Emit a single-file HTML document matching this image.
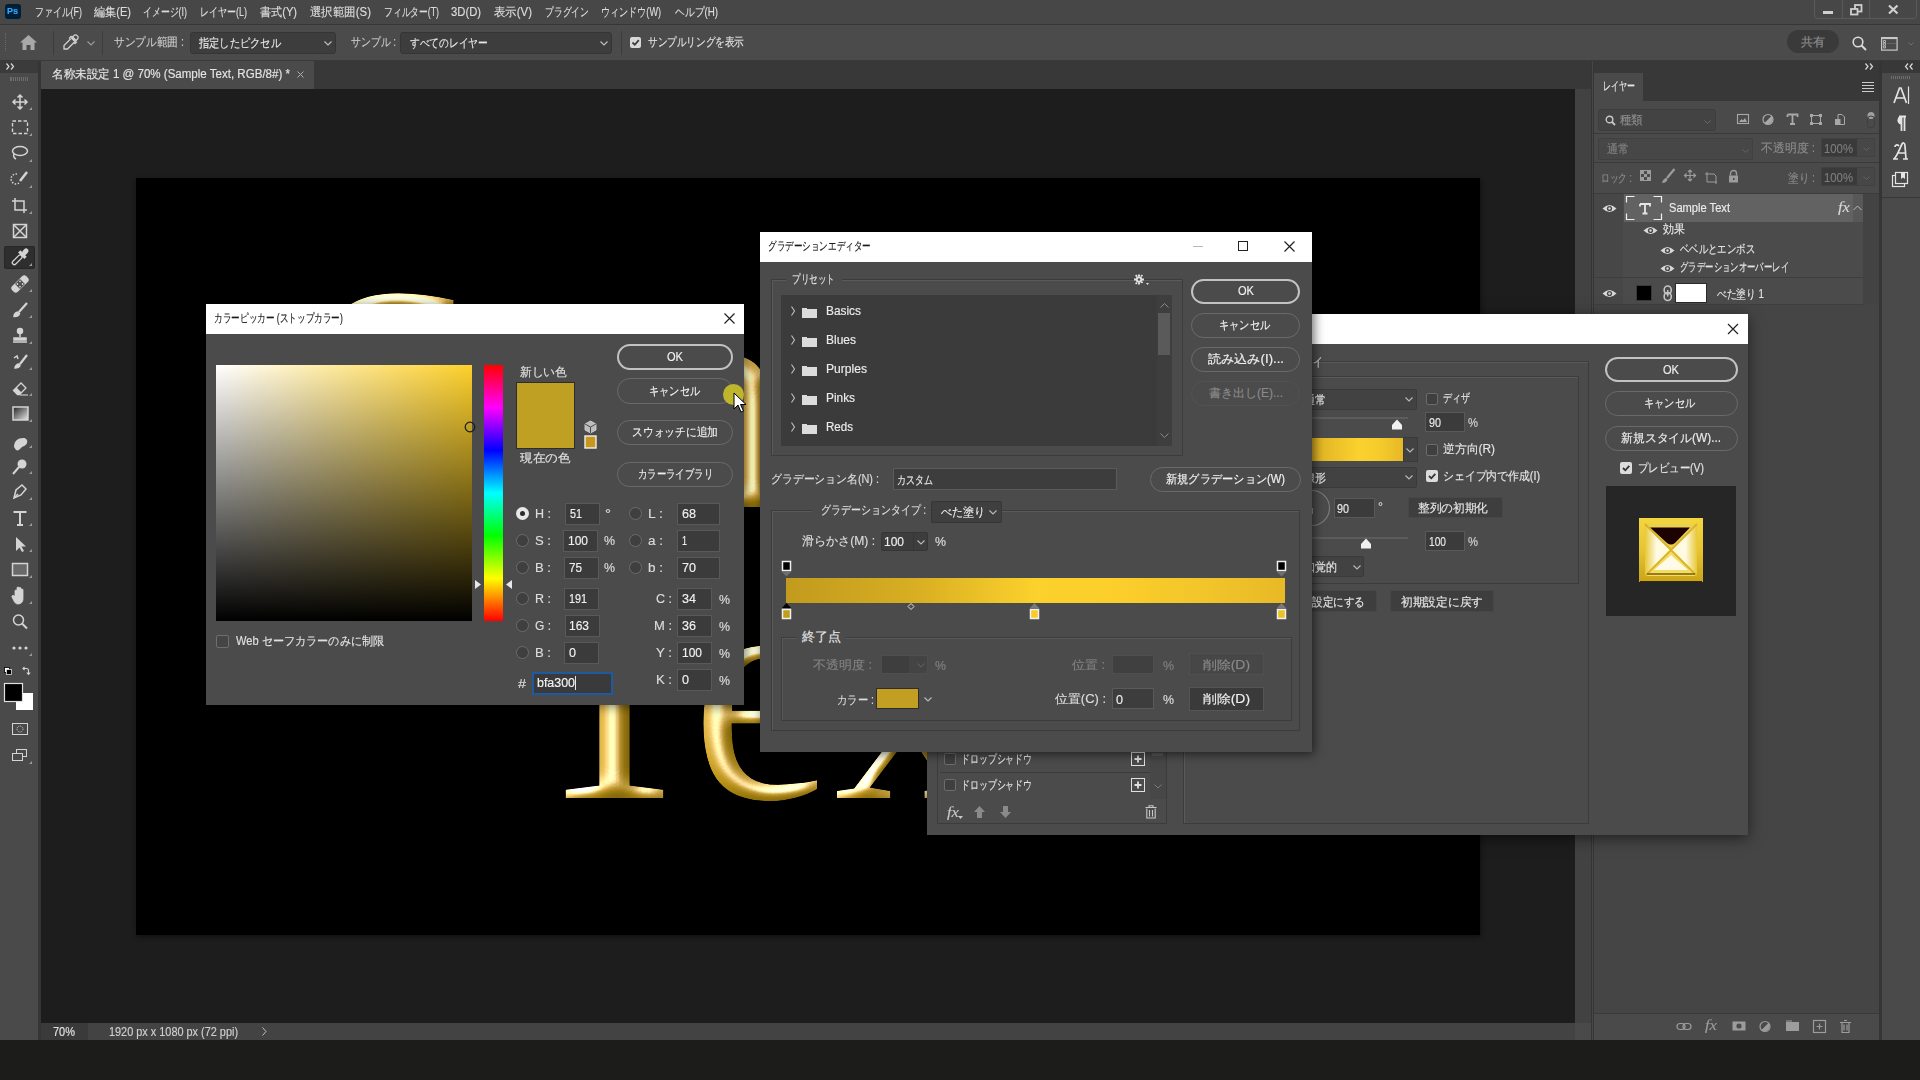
<!DOCTYPE html>
<html><head><meta charset="utf-8">
<style>
*{box-sizing:border-box;margin:0;padding:0}
html,body{width:1920px;height:1080px;overflow:hidden;background:#1c1d1b;font-family:"Liberation Sans",sans-serif;color:#d6d6d6;font-size:12px}
.a{position:absolute}
.t{position:absolute;white-space:nowrap;line-height:1;font-size:12px;transform-origin:0 0;color:#dcdcdc;-webkit-text-stroke:0.15px currentColor}
.inp{position:absolute;background:#3b3b3b;border:1px solid #595959}
.btn{position:absolute;border:1px solid #6a6a6a;border-radius:13px}
.btnp{position:absolute;border:2px solid #c2c2c2;border-radius:13px}
.rad{position:absolute;width:13px;height:13px;border-radius:50%;border:1px solid #6c6c6c;background:#3f3f3f}
.chk{position:absolute;width:12px;height:12px;border-radius:2px;border:1px solid #6c6c6c;background:#3f3f3f}
.grp{position:absolute;border:1px solid #3c3c3c;box-shadow:1px 1px 0 #5a5a5a inset}
.dlg{position:absolute;background:#4b4b4b;box-shadow:0 3px 14px rgba(0,0,0,.55)}
.title{position:absolute;left:0;top:0;right:0;height:30px;background:#fff}
svg{position:absolute;overflow:visible}
</style></head><body>
<!-- ===== MENU BAR ===== -->
<div class="a" style="left:0;top:0;width:1920px;height:25px;background:#474747;border-bottom:1px solid #363636"></div>
<div class="a" style="left:5px;top:4px;width:16px;height:15px;background:#001e36;border-radius:3px"></div>
<span class="t" style="left:7px;top:7px;font-size:9px;font-weight:bold;color:#31a8ff;transform:scaleX(0.999)">Ps</span>
<span class="t" style="left:35px;top:6px;transform:scaleX(0.742)">ファイル(F)</span>
<span class="t" style="left:94px;top:6px;transform:scaleX(0.925)">編集(E)</span>
<span class="t" style="left:143px;top:6px;transform:scaleX(0.742)">イメージ(I)</span>
<span class="t" style="left:200px;top:6px;transform:scaleX(0.750)">レイヤー(L)</span>
<span class="t" style="left:260px;top:6px;transform:scaleX(0.925)">書式(Y)</span>
<span class="t" style="left:310px;top:6px;transform:scaleX(0.953)">選択範囲(S)</span>
<span class="t" style="left:384px;top:6px;transform:scaleX(0.730)">フィルター(T)</span>
<span class="t" style="left:451px;top:6px;transform:scaleX(0.938)">3D(D)</span>
<span class="t" style="left:494px;top:6px;transform:scaleX(0.950)">表示(V)</span>
<span class="t" style="left:545px;top:6px;transform:scaleX(0.733)">プラグイン</span>
<span class="t" style="left:601px;top:6px;transform:scaleX(0.756)">ウィンドウ(W)</span>
<span class="t" style="left:675px;top:6px;transform:scaleX(0.816)">ヘルプ(H)</span>
<!-- window controls -->
<div class="a" style="left:1814px;top:-1px;width:103px;height:20px;border:1px solid #5a5a5a;border-radius:0 0 3px 3px"></div>
<div class="a" style="left:1842px;top:0;width:1px;height:18px;background:#5a5a5a"></div>
<div class="a" style="left:1869px;top:0;width:1px;height:18px;background:#5a5a5a"></div>
<div class="a" style="left:1823px;top:11px;width:10px;height:3px;background:#d0d0d0"></div>
<svg style="left:1850px;top:4px" width="13" height="12"><rect x="5" y="1" width="6.5" height="6.5" fill="none" stroke="#d0d0d0" stroke-width="1.8"/><rect x="1" y="5" width="6.5" height="5.5" fill="#474747" stroke="#d0d0d0" stroke-width="1.8"/></svg>
<svg style="left:1888px;top:5px" width="11" height="9"><path d="M1 0.5L9.5 8.5M9.5 0.5L1 8.5" stroke="#d0d0d0" stroke-width="2.2"/></svg>

<!-- ===== OPTIONS BAR ===== -->
<div class="a" style="left:0;top:25px;width:1920px;height:36px;background:#4b4b4b;border-bottom:1px solid #3a3a3a"></div>
<div class="a" style="left:5px;top:33px;width:2px;height:18px;border-left:1px dotted #6a6a6a"></div>
<svg style="left:20px;top:35px" width="17" height="15"><path d="M8.5 0L17 7.5H14.5V15H10.5V10H6.5V15H2.5V7.5H0Z" fill="#a8a8a8"/></svg>
<div class="a" style="left:53px;top:31px;width:1px;height:24px;background:#3c3c3c"></div>
<svg style="left:62px;top:34px" width="17" height="17"><path d="M15 1.5a2 2 0 0 0-3 0l-2 2-1-1-1.5 1.5 1 1-6.5 6.5v3.5h3.5l6.5-6.5 1 1 1.5-1.5-1-1 2-2a2 2 0 0 0 0-3z" fill="none" stroke="#d0d0d0" stroke-width="1.3"/><path d="M10 3.5l3.5 3.5" stroke="#d0d0d0" stroke-width="3"/></svg>
<svg style="left:87px;top:41px" width="8" height="5"><path d="M0.5 0.5L4 4L7.5 0.5" fill="none" stroke="#9a9a9a" stroke-width="1.2"/></svg>
<div class="a" style="left:102px;top:31px;width:1px;height:24px;background:#3c3c3c"></div>
<span class="t" style="left:114px;top:36px;color:#c8c8c8;transform:scaleX(0.890)">サンプル範囲 :</span>
<div class="inp" style="left:190px;top:32px;width:146px;height:22px;background:#3d3d3d;border-color:#353535;border-radius:3px"></div>
<span class="t" style="left:199px;top:37px;color:#e6e6e6;transform:scaleX(0.854)">指定したピクセル</span>
<svg style="left:324px;top:41px" width="8" height="5"><path d="M0.5 0.5L4 4L7.5 0.5" fill="none" stroke="#bdbdbd" stroke-width="1.2"/></svg>
<span class="t" style="left:351px;top:36px;color:#c8c8c8;transform:scaleX(0.823)">サンプル :</span>
<div class="inp" style="left:400px;top:32px;width:212px;height:22px;background:#3d3d3d;border-color:#353535;border-radius:3px"></div>
<span class="t" style="left:410px;top:37px;color:#e6e6e6;transform:scaleX(0.812)">すべてのレイヤー</span>
<svg style="left:600px;top:41px" width="8" height="5"><path d="M0.5 0.5L4 4L7.5 0.5" fill="none" stroke="#bdbdbd" stroke-width="1.2"/></svg>
<div class="a" style="left:621px;top:31px;width:1px;height:24px;background:#3c3c3c"></div>
<div class="a" style="left:630px;top:37px;width:11px;height:11px;background:#d8d8d8;border-radius:2px"></div>
<svg style="left:631px;top:38px" width="9" height="9"><path d="M1.5 4.5L3.8 6.8L7.8 2.2" fill="none" stroke="#3a3a3a" stroke-width="1.8"/></svg>
<span class="t" style="left:648px;top:36px;color:#e0e0e0;transform:scaleX(0.800)">サンプルリングを表示</span>
<div class="a" style="left:1787px;top:30px;width:52px;height:23px;background:#3a3a3a;border-radius:12px"></div>
<span class="t" style="left:1801px;top:36px;color:#8e8e8e;transform:scaleX(1.000)">共有</span>
<svg style="left:1852px;top:36px" width="15" height="15"><circle cx="6" cy="6" r="4.8" fill="none" stroke="#dcdcdc" stroke-width="1.6"/><path d="M9.5 9.5L14 14" stroke="#dcdcdc" stroke-width="2"/></svg>
<svg style="left:1881px;top:37px" width="17" height="14"><rect x="0.6" y="0.6" width="15.5" height="12.5" fill="none" stroke="#c8c8c8" stroke-width="1.2"/><path d="M1 1.5H16" stroke="#c8c8c8" stroke-width="1.2"/><path d="M2.5 3.5H4.5V5.5H2.5ZM2.5 6.2H4.5V8.2H2.5ZM2.5 9H4.5V11H2.5Z" fill="none" stroke="#c8c8c8" stroke-width="0.8"/><path d="M6 6.5H15" stroke="#6a6a6a" stroke-width="0.8"/></svg>
<svg style="left:1908px;top:42px" width="6" height="4"><path d="M0.5 0.5L3 3L5.5 0.5" fill="none" stroke="#707070" stroke-width="1"/></svg>

<!-- ===== LEFT TOOLBAR ===== -->
<div class="a" style="left:0;top:61px;width:38px;height:979px;background:#4a4a4a"></div>
<div class="a" style="left:0;top:61px;width:38px;height:12px;background:#3b3b3b"></div>
<svg style="left:6px;top:63px" width="10" height="7"><path d="M0.5 0.5L3 3.5L0.5 6.5M5 0.5L7.5 3.5L5 6.5" fill="none" stroke="#d8d8d8" stroke-width="1.2"/></svg>
<div class="a" style="left:10px;top:77px;width:19px;height:4px;border-left:1px solid #6e6e6e;background:repeating-linear-gradient(90deg,#6e6e6e 0 1px,transparent 1px 2px)"></div>
<div class="a" style="left:38px;top:61px;width:3px;height:979px;background:#353535"></div>
<div class="a" style="left:4px;top:246px;width:31px;height:23px;background:#2e2e2e;border:1px solid #262626;border-radius:2px"></div>
<svg style="left:0;top:0" width="40" height="800">
<defs><linearGradient id="tgrad" x1="0" y1="0" x2="1" y2="1"><stop offset="0" stop-color="#222"/><stop offset="1" stop-color="#e8e8e8"/></linearGradient></defs>
<g fill="none" stroke="#d4d4d4" stroke-width="1.5">
<!-- move -->
<path d="M20 95V109M13 102H27M17.5 97.5L20 95L22.5 97.5M17.5 106.5L20 109L22.5 106.5M15.5 99.5L13 102L15.5 104.5M24.5 99.5L27 102L24.5 104.5"/>
<!-- marquee -->
<rect x="12.5" y="121" width="15" height="12.5" stroke-dasharray="3.5 2" stroke-width="1.4"/>
<!-- lasso -->
<ellipse cx="20" cy="151" rx="7.5" ry="4.5"/><path d="M14 154c-1 2 0 4 2 5"/>
<!-- quick select -->
<path d="M17 174a5 5 0 1 0 2 9" stroke-dasharray="1.5 1.5"/><path d="M27 172L20 181" stroke-width="2.5"/>
<!-- crop -->
<path d="M15 198V210H27M12 201H24V213"/>
<!-- frame -->
<rect x="13.5" y="224.5" width="13" height="13"/><path d="M13.5 224.5L26.5 237.5M26.5 224.5L13.5 237.5"/>
<!-- eyedropper -->
<g transform="rotate(45 20 257)"><rect x="18" y="255" width="4" height="12" rx="2" stroke-width="1.3"/><rect x="15.5" y="252" width="9" height="3.2" fill="#d4d4d4" stroke="none"/><rect x="17.5" y="246" width="5" height="7" rx="2.5" fill="#d4d4d4" stroke="none"/></g>
<!-- healing -->
<g transform="rotate(-45 20 284)"><rect x="10" y="280" width="20" height="8" rx="3" fill="#d4d4d4" stroke="none"/><rect x="16.5" y="280.5" width="7" height="7" fill="#4a4a4a" stroke="none"/><g fill="#d4d4d4" stroke="none"><circle cx="18.2" cy="282.2" r="0.9"/><circle cx="21.8" cy="282.2" r="0.9"/><circle cx="18.2" cy="285.8" r="0.9"/><circle cx="21.8" cy="285.8" r="0.9"/></g></g>
<!-- brush -->
<path d="M27 303L19 312" stroke-width="2.2"/><path d="M18 312c-2 0-4 2-4 4.5c2 0 5-1 5.5-3z" fill="#d4d4d4"/>
<!-- stamp -->
<circle cx="20" cy="331" r="2.5" fill="#d4d4d4"/><path d="M20 333V337M14 338H26V340H14Z" fill="#d4d4d4"/><path d="M13 342H27"/>
<!-- history brush -->
<path d="M27 355L20 364" stroke-width="2.2"/><path d="M19 364c-2 0-4 2-4 4c2 0 5-1 5-3z" fill="#d4d4d4"/><path d="M14 358l3-2 1 3"/>
<!-- eraser -->
<path d="M13.5 390.5L21 383L26 388L19.5 394.5H17.5Z" stroke-width="1.3"/><path d="M13.5 390.5L16.5 387.5L21.5 392.5L19.5 394.5H17.5Z" fill="#d4d4d4" stroke="none"/><path d="M20 395H28" stroke-width="1.1"/>
<!-- gradient tool -->
<rect x="13" y="407" width="15" height="13" stroke="#d4d4d4" fill="url(#tgrad)"/>
<!-- blur -->
<path d="M14 447c0-6 4-9 9-9c3 0 5 2 4 5c-1 3-4 3-6 5c-2 2-3 3-5 2z" fill="#d4d4d4" stroke="none"/>
<!-- dodge -->
<circle cx="22" cy="464" r="4.5" fill="#d4d4d4" stroke="none"/><path d="M19 467L13 474" stroke-width="2"/>
<!-- pen -->
<path d="M14 498L16 490L22 485L26 489L21 495Z"/><path d="M14 498L18 494"/>
<!-- type -->
<path d="M13.5 512H26.5M20 512V525M17 525H23" stroke-width="2"/>
<!-- path select -->
<path d="M16 537V551L19.5 547.5L22 552L24 551L21.5 546.5H26Z" fill="#d4d4d4" stroke="none"/>
<!-- rectangle -->
<rect x="12.5" y="563.5" width="15" height="12" fill="#6a6a6a" stroke="#d4d4d4"/>
<!-- hand -->
<path d="M15 599V591a1 1 0 0 1 2 0V596M17 596V588a1 1 0 0 1 2 0V596M19 596V588.5a1 1 0 0 1 2 0V596M21 596V590a1 1 0 0 1 2 0V599c0 3-2 5-5 5c-2 0-3-1-4-3l-2-4a1 1 0 0 1 2-1z" fill="#d4d4d4" stroke="#d4d4d4" stroke-width="0.8"/>
<!-- zoom -->
<circle cx="18.5" cy="620" r="5"/><path d="M22 623.5L27 628.5" stroke-width="2"/>
</g>
<g fill="#d4d4d4"><circle cx="14" cy="648" r="1.6"/><circle cx="20" cy="648" r="1.6"/><circle cx="26" cy="648" r="1.6"/></g>
<!-- small tri marks -->
<g fill="#9a9a9a">
<path d="M29 110h3v-3z"/><path d="M29 136h3v-3z"/><path d="M29 162h3v-3z"/><path d="M29 188h3v-3z"/><path d="M29 214h3v-3z"/><path d="M29 266h3v-3z"/><path d="M29 292h3v-3z"/><path d="M29 318h3v-3z"/><path d="M29 344h3v-3z"/><path d="M29 370h3v-3z"/><path d="M29 396h3v-3z"/><path d="M29 422h3v-3z"/><path d="M29 448h3v-3z"/><path d="M29 474h3v-3z"/><path d="M29 500h3v-3z"/><path d="M29 526h3v-3z"/><path d="M29 552h3v-3z"/><path d="M29 578h3v-3z"/><path d="M29 604h3v-3z"/><path d="M29 656h3v-3z"/><path d="M29 764h3v-3z"/>
</g>
<!-- fg/bg small -->
<rect x="4.5" y="667.5" width="5" height="5" fill="#fff" stroke="#000" stroke-width="0.8"/><rect x="6.5" y="669.5" width="5" height="5" fill="#000" stroke="#ddd" stroke-width="0.8"/>
<path d="M23 668.5H26.5Q28.5 668.5 28.5 670.5V674M26.8 672.5L28.5 674.5L30.2 672.5M24.5 667L23 668.5L24.5 670" fill="none" stroke="#d4d4d4" stroke-width="1.1"/>
<!-- fg bg -->
<rect x="15.5" y="692.5" width="18" height="18" fill="#fff" stroke="#4a4a4a"/>
<rect x="4.5" y="683.5" width="18" height="18" fill="#000" stroke="#e0e0e0" stroke-width="1.2"/>
<!-- quick mask -->
<rect x="12.5" y="723.5" width="15" height="11" fill="none" stroke="#d4d4d4"/><circle cx="20" cy="729" r="3" fill="none" stroke="#d4d4d4" stroke-dasharray="1 1"/>
<!-- screen mode -->
<rect x="16.5" y="749.5" width="10" height="7" fill="none" stroke="#d4d4d4"/><rect x="12.5" y="753.5" width="10" height="7" fill="#4a4a4a" stroke="#d4d4d4"/>
</svg>

<!-- ===== DOCUMENT AREA ===== -->
<div class="a" style="left:41px;top:61px;width:1550px;height:28px;background:#383838"></div>
<div class="a" style="left:41px;top:61px;width:273px;height:28px;background:#4a4a4a"></div>
<span class="t" style="left:52px;top:68px;color:#e4e4e4;transform:scaleX(0.962)">名称未設定 1 @ 70% (Sample Text, RGB/8#) *</span>
<svg style="left:297px;top:71px" width="7" height="7"><path d="M0.5 0.5L6.5 6.5M6.5 0.5L0.5 6.5" stroke="#b0b0b0" stroke-width="1"/></svg>
<div class="a" style="left:41px;top:89px;width:1534px;height:934px;background:#1d1d1d"></div>
<div class="a" style="left:1575px;top:89px;width:16px;height:934px;background:#424242"></div>
<div class="a" style="left:41px;top:1023px;width:1550px;height:17px;background:#434343"></div>
<div class="a" style="left:41px;top:1023px;width:47px;height:17px;background:#3a3a3a"></div>
<span class="t" style="left:53px;top:1026px;color:#e0e0e0;transform:scaleX(0.915)">70%</span>
<span class="t" style="left:109px;top:1026px;color:#d0d0d0;transform:scaleX(0.908)">1920 px x 1080 px (72 ppi)</span>
<svg style="left:262px;top:1027px" width="5" height="9"><path d="M0.5 0.5L4 4.5L0.5 8.5" fill="none" stroke="#c0c0c0" stroke-width="1"/></svg>
<div class="a" style="left:1575px;top:1023px;width:16px;height:17px;background:#4a4a4a"></div>

<!-- CANVAS -->
<div id="canvas" class="a" style="left:136px;top:178px;width:1344px;height:757px;background:#000;overflow:hidden;box-shadow:1px 2px 5px rgba(0,0,0,.45)">
<svg width="0" height="0" style="position:absolute"><defs>
<filter id="bevel" x="-5%" y="-5%" width="110%" height="110%">
<feGaussianBlur in="SourceAlpha" stdDeviation="8" result="blur"/>
<feSpecularLighting in="blur" surfaceScale="10" specularConstant="1.4" specularExponent="12" lighting-color="#fffbe0" result="spec"><feDistantLight azimuth="240" elevation="45"/></feSpecularLighting>
<feComposite in="spec" in2="SourceAlpha" operator="in" result="specOut"/>
<feDiffuseLighting in="blur" surfaceScale="10" diffuseConstant="1.1" lighting-color="#fff" result="diff"><feDistantLight azimuth="225" elevation="55"/></feDiffuseLighting>
<feComposite in="SourceGraphic" in2="diff" operator="arithmetic" k1="1.25" k2="0" k3="0" k4="0" result="lit"/>
<feComposite in="lit" in2="specOut" operator="arithmetic" k1="0" k2="1" k3="1" k4="0" result="o"/>
<feComposite in="o" in2="SourceAlpha" operator="in"/>
</filter></defs></svg>
<div class="a" style="left:169px;top:59px;font-family:'Liberation Serif',serif;font-size:323px;line-height:1;white-space:nowrap;color:#c89e18;filter:url(#bevel)">Sample</div>
<div class="a" style="left:380px;top:350px;font-family:'Liberation Serif',serif;font-size:323px;line-height:1;white-space:nowrap;color:#c89e18;filter:url(#bevel)">Text</div>
</div>

<!-- ===== RIGHT PANELS ===== -->

<div class="a" style="left:1591px;top:61px;width:3px;height:979px;background:#353535"></div>
<div class="a" style="left:1592px;top:61px;width:1px;height:979px;background:#474747"></div>
<div class="a" style="left:1594px;top:61px;width:326px;height:12px;background:#383838"></div>
<svg style="left:1865px;top:63px" width="10" height="7"><path d="M0.5 0.5L3 3.5L0.5 6.5M5 0.5L7.5 3.5L5 6.5" fill="none" stroke="#d8d8d8" stroke-width="1.2"/></svg>
<svg style="left:1905px;top:63px" width="10" height="7"><path d="M3 0.5L0.5 3.5L3 6.5M7.5 0.5L5 3.5L7.5 6.5" fill="none" stroke="#d8d8d8" stroke-width="1.2"/></svg>
<div class="a" style="left:1594px;top:73px;width:285px;height:967px;background:#454545"></div>
<div class="a" style="left:1594px;top:73px;width:285px;height:28px;background:#383838"></div>
<div class="a" style="left:1594px;top:73px;width:49px;height:28px;background:#4a4a4a"></div>
<span class="t" style="left:1603px;top:80px;color:#e8e8e8;transform:scaleX(0.667)">レイヤー</span>
<div class="a" style="left:1862px;top:82px;width:12px;height:1px;box-shadow:0 0 0 #ccc,0 3px 0 #ccc,0 6px 0 #ccc,0 9px 0 #ccc;background:#ccc"></div>
<div class="a" style="left:1594px;top:101px;width:285px;height:32px;background:#4a4a4a"></div>
<div class="a" style="left:1598px;top:109px;width:118px;height:22px;background:#434343;border:1px solid #3e3e3e;border-radius:3px"></div>
<svg style="left:1605px;top:115px" width="11" height="11"><circle cx="4.5" cy="4.5" r="3.3" fill="none" stroke="#c8c8c8" stroke-width="1.4"/><path d="M7 7L10 10" stroke="#c8c8c8" stroke-width="1.8"/></svg>
<span class="t" style="left:1620px;top:114px;color:#8c8c8c;transform:scaleX(0.958)">種類</span>
<svg style="left:1704px;top:120px" width="7" height="4"><path d="M0.5 0.5L3.5 3.5L6.5 0.5" fill="none" stroke="#6a6a6a" stroke-width="1"/></svg>
<svg style="left:1736px;top:113px" width="140" height="16">
<rect x="1.5" y="1.5" width="11" height="9" fill="none" stroke="#a8a8a8" stroke-width="1.1"/><path d="M3 9L5.5 6L7 7.5L9 5L11 9Z" fill="#a8a8a8"/>
<circle cx="32" cy="6.5" r="5" fill="none" stroke="#a8a8a8" stroke-width="1.2"/><path d="M28.5 10a5 5 0 0 0 7-7z" fill="#a8a8a8"/>
<path d="M51.5 1.5H61.5V4M56.5 1.5V11M54 11H59M51.5 1.5V4" fill="none" stroke="#a8a8a8" stroke-width="1.8"/>
<rect x="75.5" y="2.5" width="9" height="8" fill="none" stroke="#a8a8a8" stroke-width="1"/><g fill="#a8a8a8"><rect x="74" y="1" width="3" height="3"/><rect x="83" y="1" width="3" height="3"/><rect x="74" y="9" width="3" height="3"/><rect x="83" y="9" width="3" height="3"/></g>
<path d="M102 1.5H106L108.5 4V11.5H102Z" fill="none" stroke="#a8a8a8" stroke-width="1"/><rect x="99" y="6" width="5.5" height="6" fill="#a8a8a8"/>
<circle cx="135" cy="2.5" r="3.5" fill="#a0a0a0"/><rect x="131.5" y="3" width="7" height="12" rx="3.5" fill="none" stroke="#3e3e3e"/>
</svg>
<div class="a" style="left:1594px;top:133px;width:285px;height:1px;background:#3a3a3a"></div>
<div class="a" style="left:1594px;top:134px;width:285px;height:28px;background:#4a4a4a"></div>
<div class="a" style="left:1598px;top:138px;width:155px;height:22px;background:#474747;border:1px solid #404040;border-radius:2px"></div>
<span class="t" style="left:1607px;top:143px;color:#808080;transform:scaleX(0.917)">通常</span>
<svg style="left:1742px;top:149px" width="7" height="4"><path d="M0.5 0.5L3.5 3.5L6.5 0.5" fill="none" stroke="#626262" stroke-width="1"/></svg>
<span class="t" style="left:1761px;top:142px;color:#8a8a8a;transform:scaleX(0.988)">不透明度 :</span>
<div class="a" style="left:1821px;top:138px;width:54px;height:19px;background:#474747;border:1px solid #414141"></div>
<div class="a" style="left:1822px;top:139px;width:35px;height:17px;background:#3a3a3a"></div>
<span class="t" style="left:1824px;top:143px;color:#7c7c7c;transform:scaleX(0.945)">100%</span>
<svg style="left:1863px;top:147px" width="7" height="4"><path d="M0.5 0.5L3.5 3.5L6.5 0.5" fill="none" stroke="#626262" stroke-width="1"/></svg>
<div class="a" style="left:1594px;top:162px;width:285px;height:1px;background:#3a3a3a"></div>
<div class="a" style="left:1594px;top:163px;width:285px;height:30px;background:#4a4a4a"></div>
<span class="t" style="left:1601px;top:172px;color:#8a8a8a;transform:scaleX(0.726)">ロック :</span>
<svg style="left:1640px;top:170px" width="100" height="14">
<rect x="0.5" y="0.5" width="10" height="10" fill="none" stroke="#9c9c9c"/><g fill="#9c9c9c"><rect x="1" y="1" width="3" height="3"/><rect x="7" y="1" width="3" height="3"/><rect x="4" y="4" width="3" height="3"/><rect x="1" y="7" width="3" height="3"/><rect x="7" y="7" width="3" height="3"/></g>
<path d="M34.5 -1L27 8" stroke="#9c9c9c" stroke-width="2.2"/><path d="M26.5 8c-2 0-4 2-4.5 5c2.5 0 5-1 5.5-3.5z" fill="#9c9c9c"/>
<path d="M50 0V11M44.5 5.5H55.5M48 2L50 0L52 2M48 9L50 11L52 9M46.5 3.5L44.5 5.5L46.5 7.5M53.5 3.5L55.5 5.5L53.5 7.5" fill="none" stroke="#9c9c9c" stroke-width="1.2"/>
<path d="M67 2V12H77M65 4H74L76 6V14" fill="none" stroke="#9c9c9c" stroke-width="1"/>
<rect x="89" y="5.5" width="9" height="7" fill="#9c9c9c"/><path d="M90.5 5.5V3.5a3 3 0 0 1 6 0V5.5" fill="none" stroke="#9c9c9c" stroke-width="1.4"/><rect x="93" y="8" width="1.5" height="2" fill="#4a4a4a"/>
</svg>
<span class="t" style="left:1788px;top:172px;color:#8a8a8a;transform:scaleX(0.880)">塗り :</span>
<div class="a" style="left:1821px;top:167px;width:54px;height:19px;background:#474747;border:1px solid #414141"></div>
<div class="a" style="left:1822px;top:168px;width:35px;height:17px;background:#3a3a3a"></div>
<span class="t" style="left:1824px;top:172px;color:#7c7c7c;transform:scaleX(0.945)">100%</span>
<svg style="left:1863px;top:176px" width="7" height="4"><path d="M0.5 0.5L3.5 3.5L6.5 0.5" fill="none" stroke="#626262" stroke-width="1"/></svg>
<div class="a" style="left:1594px;top:193px;width:285px;height:1px;background:#3c3c3c"></div>
<!-- layer list -->
<div class="a" style="left:1594px;top:194px;width:29px;height:110px;background:#474747"></div>
<div class="a" style="left:1623px;top:194px;width:240px;height:84px;background:#4b4b4b"></div>
<div class="a" style="left:1624px;top:194px;width:229px;height:28px;background:#626262"></div>
<div class="a" style="left:1853px;top:194px;width:10px;height:28px;background:#585858"></div>
<div class="a" style="left:1863px;top:194px;width:16px;height:110px;background:#434343"></div>
<div class="a" style="left:1594px;top:277px;width:269px;height:1px;background:#3e3e3e"></div>
<div class="a" style="left:1623px;top:278px;width:240px;height:27px;background:#4b4b4b"></div>
<div class="a" style="left:1594px;top:304px;width:269px;height:1px;background:#3e3e3e"></div>
<svg style="left:1600px;top:200px" width="120" height="100">
<g id="eye"><path d="M2.5 8.5Q9.5 1.5 16.5 8.5Q9.5 15.5 2.5 8.5Z" fill="#d8d8d8"/><circle cx="9.5" cy="8.5" r="2.6" fill="#474747"/><circle cx="9.5" cy="8.5" r="1.2" fill="#d8d8d8"/></g>
<g transform="translate(41 22)"><path d="M2.5 8.5Q9.5 1.5 16.5 8.5Q9.5 15.5 2.5 8.5Z" fill="#d8d8d8"/><circle cx="9.5" cy="8.5" r="2.6" fill="#474747"/><circle cx="9.5" cy="8.5" r="1.2" fill="#d8d8d8"/></g>
<g transform="translate(58 42)"><path d="M2.5 8.5Q9.5 1.5 16.5 8.5Q9.5 15.5 2.5 8.5Z" fill="#d8d8d8"/><circle cx="9.5" cy="8.5" r="2.6" fill="#474747"/><circle cx="9.5" cy="8.5" r="1.2" fill="#d8d8d8"/></g>
<g transform="translate(58 60)"><path d="M2.5 8.5Q9.5 1.5 16.5 8.5Q9.5 15.5 2.5 8.5Z" fill="#d8d8d8"/><circle cx="9.5" cy="8.5" r="2.6" fill="#474747"/><circle cx="9.5" cy="8.5" r="1.2" fill="#d8d8d8"/></g>
<g transform="translate(0 85)"><path d="M2.5 8.5Q9.5 1.5 16.5 8.5Q9.5 15.5 2.5 8.5Z" fill="#d8d8d8"/><circle cx="9.5" cy="8.5" r="2.6" fill="#474747"/><circle cx="9.5" cy="8.5" r="1.2" fill="#d8d8d8"/></g>
<path d="M26.5 2.5V-3.5H34.5M53.5 -3.5H61.5V2.5M26.5 13.5V19.5H34.5M53.5 19.5H61.5V13.5" fill="none" stroke="#f0f0f0" stroke-width="1.2"/>
<path d="M40 4H50V6.5M45 4V13.5M42.5 13.5H47.5M40 4V6.5" fill="none" stroke="#e6e6e6" stroke-width="1.8"/>
</svg>
<span class="t" style="left:1669px;top:202px;color:#ececec;transform:scaleX(0.927)">Sample Text</span>
<span class="t" style="left:1838px;top:201px;color:#d8d8d8;font-style:italic;font-size:14px;font-family:'Liberation Serif',serif;transform:scaleX(1.187)">fx</span>
<svg style="left:1853px;top:205px" width="9" height="6"><path d="M0.5 5L4.5 1L8.5 5" fill="none" stroke="#b8b8b8" stroke-width="1"/></svg>
<span class="t" style="left:1663px;top:223px;color:#e4e4e4;transform:scaleX(0.917)">効果</span>
<span class="t" style="left:1680px;top:243px;color:#e4e4e4;transform:scaleX(0.781)">ベベルとエンボス</span>
<span class="t" style="left:1680px;top:261px;color:#e4e4e4;transform:scaleX(0.699)">グラデーションオーバーレイ</span>
<div class="a" style="left:1636px;top:285px;width:16px;height:16px;background:#000;border:1px solid #3a3a3a"></div>
<svg style="left:1663px;top:285px" width="10" height="17"><rect x="1.2" y="1" width="7" height="8" rx="3.5" fill="none" stroke="#c4c4c4" stroke-width="1.6"/><rect x="1.2" y="7.5" width="7" height="8" rx="3.5" fill="none" stroke="#c4c4c4" stroke-width="1.6"/><path d="M4.7 5V11.5" stroke="#c4c4c4" stroke-width="1.4"/></svg>
<div class="a" style="left:1675px;top:283px;width:32px;height:20px;background:#fff;border:1px solid #2a2a2a"></div>
<span class="t" style="left:1717px;top:288px;color:#e4e4e4;transform:scaleX(0.810)">べた塗り 1</span>
<!-- footer -->
<div class="a" style="left:1594px;top:1013px;width:285px;height:1px;background:#3a3a3a"></div>
<div class="a" style="left:1594px;top:1014px;width:285px;height:26px;background:#4a4a4a"></div>
<svg style="left:1676px;top:1019px" width="180" height="16">
<g fill="none" stroke="#9c9c9c" stroke-width="1.2">
<rect x="1" y="4.5" width="8" height="6" rx="3"/><rect x="7" y="4.5" width="8" height="6" rx="3"/>
<rect x="56.5" y="2.5" width="13" height="9" fill="#9c9c9c" stroke="none"/>
<circle cx="89" cy="7.5" r="5"/>
<rect x="110" y="3" width="13" height="9" fill="#9c9c9c" stroke="none"/><rect x="110" y="1.5" width="6" height="1" fill="#9c9c9c" stroke="none"/>
<rect x="137.5" y="1.5" width="12" height="12"/><path d="M143.5 4.5V10.5M140.5 7.5H146.5"/>
<path d="M164 3.5H175M166 3.5V13.5H173V3.5M168 1.5H171M168 5.5V11.5M171 5.5V11.5"/>
</g>
<circle cx="63" cy="7" r="2.6" fill="#4a4a4a"/>
<path d="M85.5 11a5 5 0 0 0 7-7z" fill="#9c9c9c"/>
</svg>
<span class="t" style="left:1705px;top:1019px;color:#9c9c9c;font-style:italic;font-size:14px;font-family:'Liberation Serif',serif;transform:scaleX(1.187)">fx</span>
<!-- right icon column -->
<div class="a" style="left:1879px;top:61px;width:3px;height:979px;background:#353535"></div>
<div class="a" style="left:1882px;top:73px;width:38px;height:967px;background:#4a4a4a"></div>
<div class="a" style="left:1882px;top:197px;width:38px;height:1px;background:#383838"></div>
<div class="a" style="left:1891px;top:76px;width:19px;height:3px;background:repeating-linear-gradient(90deg,#6e6e6e 0 1px,transparent 1px 2px)"></div>
<svg style="left:1890px;top:86px" width="24" height="104">
<path d="M4 17L9.5 2H11L16.5 17M6 12H14.5" fill="none" stroke="#e4e4e4" stroke-width="1.7"/><path d="M18.5 0.5V18" stroke="#e4e4e4" stroke-width="1.2"/>
<path d="M9 30.5H16M11.5 30.5V45M14.5 30.5V45" fill="none" stroke="#e4e4e4" stroke-width="1.8"/><path d="M11.5 30a4 4.2 0 0 0 0 8.5z" fill="#e4e4e4"/>
<path d="M4 73C7 70 10 62 12 58C13 56 15 57 15 60L16 73M7 67H15M3 73H8M13 73H18M9 60C7 58 5 59 5 61" fill="none" stroke="#e4e4e4" stroke-width="1.7"/>
<rect x="2.5" y="89.5" width="12" height="11" fill="none" stroke="#e4e4e4" stroke-width="1.2"/><rect x="5.5" y="86.5" width="12" height="11" fill="#4a4a4a" stroke="#e4e4e4" stroke-width="1.2"/><path d="M11 87V93L13 91.5L15 93V87Z" fill="#e4e4e4"/>
</svg>


<!-- ===== DIALOGS ===== -->

<div class="dlg" style="left:927px;top:314px;width:821px;height:521px">
<div class="title"></div>
<svg style="left:800px;top:9px" width="12" height="12"><path d="M1 1L11 11M11 1L1 11" stroke="#222" stroke-width="1.2"/></svg>
</div>
<!-- LS contents (absolute coords) -->
<div class="grp" style="left:1183px;top:361px;width:406px;height:463px"></div>
<span class="t" style="left:1196px;top:356px;color:#d4d4d4;transform:scaleX(0.814)">グラデーションオーバーレイ</span>
<div class="grp" style="left:1195px;top:376px;width:384px;height:208px"></div>
<div class="inp" style="left:1200px;top:389px;width:217px;height:21px;background:#424242;border-color:#3a3a3a;border-radius:2px"></div>
<span class="t" style="left:1304px;top:394px;color:#e6e6e6;transform:scaleX(0.917)">通常</span>
<svg style="left:1405px;top:397px" width="8" height="5"><path d="M0.5 0.5L4 4L7.5 0.5" fill="none" stroke="#bbb" stroke-width="1.1"/></svg>
<div class="chk" style="left:1426px;top:393px"></div>
<span class="t" style="left:1443px;top:392px;color:#e4e4e4;transform:scaleX(0.750)">ディザ</span>
<div class="a" style="left:1200px;top:417px;width:208px;height:2px;background:#5c5c5c"></div>
<svg style="left:1391px;top:419px" width="12" height="11"><path d="M6 0.5L11 6V10.5H1V6Z" fill="#f0f0f0"/></svg>
<div class="inp" style="left:1425px;top:412px;width:40px;height:20px"></div>
<span class="t" style="left:1429px;top:417px;color:#e8e8e8;transform:scaleX(0.898)">90</span>
<span class="t" style="left:1468px;top:417px;color:#d4d4d4;transform:scaleX(0.937)">%</span>
<div class="a" style="left:1200px;top:438px;width:203px;height:23px;background:linear-gradient(90deg,#c6a11f 0%,#dcb024 55%,#fbd12e 78%,#f6cc2c 88%,#e6b826 100%)"></div>
<div class="inp" style="left:1403px;top:437px;width:15px;height:25px;background:#424242;border-color:#3a3a3a"></div>
<svg style="left:1406px;top:448px" width="8" height="5"><path d="M0.5 0.5L4 4L7.5 0.5" fill="none" stroke="#bbb" stroke-width="1.1"/></svg>
<div class="chk" style="left:1426px;top:444px"></div>
<span class="t" style="left:1443px;top:443px;color:#e4e4e4;transform:scaleX(0.987)">逆方向(R)</span>
<div class="inp" style="left:1200px;top:467px;width:217px;height:21px;background:#424242;border-color:#3a3a3a;border-radius:2px"></div>
<span class="t" style="left:1304px;top:472px;color:#e6e6e6;transform:scaleX(0.917)">線形</span>
<svg style="left:1405px;top:475px" width="8" height="5"><path d="M0.5 0.5L4 4L7.5 0.5" fill="none" stroke="#bbb" stroke-width="1.1"/></svg>
<div class="a" style="left:1426px;top:470px;width:12px;height:12px;background:#dcdcdc;border-radius:2px"></div>
<svg style="left:1427px;top:471px" width="10" height="10"><path d="M2 5L4.3 7.3L8.3 2.8" fill="none" stroke="#333" stroke-width="1.8"/></svg>
<span class="t" style="left:1443px;top:470px;color:#e4e4e4;transform:scaleX(0.904)">シェイプ内で作成(I)</span>
<svg style="left:1290px;top:489px" width="42" height="38"><circle cx="22" cy="19" r="17.5" fill="none" stroke="#7a7a7a" stroke-width="1.2"/><path d="M22 19V25" stroke="#c8c8c8" stroke-width="1.2"/></svg>
<div class="inp" style="left:1334px;top:498px;width:41px;height:20px"></div>
<span class="t" style="left:1337px;top:503px;color:#e8e8e8;transform:scaleX(0.898)">90</span>
<span class="t" style="left:1378px;top:501px;color:#d4d4d4;transform:scaleX(1.039)">°</span>
<div class="a" style="left:1408px;top:497px;width:95px;height:21px;background:#3e3e3e;border:1px solid #474747;border-radius:2px"></div>
<span class="t" style="left:1418px;top:502px;color:#e6e6e6;transform:scaleX(0.972)">整列の初期化</span>
<div class="a" style="left:1200px;top:537px;width:208px;height:2px;background:#5c5c5c"></div>
<svg style="left:1360px;top:538px" width="12" height="11"><path d="M6 0.5L11 6V10.5H1V6Z" fill="#f0f0f0"/></svg>
<div class="inp" style="left:1425px;top:531px;width:40px;height:20px"></div>
<span class="t" style="left:1429px;top:536px;color:#e8e8e8;transform:scaleX(0.849)">100</span>
<span class="t" style="left:1468px;top:536px;color:#d4d4d4;transform:scaleX(0.937)">%</span>
<div class="inp" style="left:1200px;top:556px;width:164px;height:21px;background:#424242;border-color:#3a3a3a;border-radius:2px"></div>
<span class="t" style="left:1304px;top:561px;color:#e6e6e6;transform:scaleX(0.917)">知覚的</span>
<svg style="left:1353px;top:565px" width="8" height="5"><path d="M0.5 0.5L4 4L7.5 0.5" fill="none" stroke="#bbb" stroke-width="1.1"/></svg>
<div class="a" style="left:1200px;top:590px;width:177px;height:22px;background:#3e3e3e;border:1px solid #474747;border-radius:2px"></div>
<span class="t" style="left:1291px;top:596px;color:#e6e6e6;transform:scaleX(0.881)">初期設定にする</span>
<div class="a" style="left:1390px;top:590px;width:104px;height:22px;background:#3e3e3e;border:1px solid #474747;border-radius:2px"></div>
<span class="t" style="left:1401px;top:596px;color:#e6e6e6;transform:scaleX(0.976)">初期設定に戻す</span>
<div class="btnp" style="left:1605px;top:357px;width:133px;height:25px"></div>
<span class="t" style="left:1663px;top:364px;color:#ececec;transform:scaleX(0.923)">OK</span>
<div class="btn" style="left:1605px;top:391px;width:133px;height:25px"></div>
<span class="t" style="left:1644px;top:397px;color:#ececec;transform:scaleX(0.850)">キャンセル</span>
<div class="btn" style="left:1605px;top:426px;width:133px;height:25px"></div>
<span class="t" style="left:1621px;top:432px;color:#ececec;transform:scaleX(0.987)">新規スタイル(W)...</span>
<div class="a" style="left:1620px;top:462px;width:12px;height:12px;background:#dcdcdc;border-radius:2px"></div>
<svg style="left:1621px;top:463px" width="10" height="10"><path d="M2 5L4.3 7.3L8.3 2.8" fill="none" stroke="#333" stroke-width="1.8"/></svg>
<span class="t" style="left:1638px;top:462px;color:#e4e4e4;transform:scaleX(0.868)">プレビュー(V)</span>
<div class="a" style="left:1606px;top:486px;width:130px;height:130px;background:#262626"></div>
<svg style="left:1639px;top:518px" width="65" height="65">
<defs><linearGradient id="pgf" x1="0" y1="0" x2="0" y2="1"><stop offset="0" stop-color="#f2d640"/><stop offset="0.5" stop-color="#e6c530"/><stop offset="1" stop-color="#caa418"/></linearGradient>
<linearGradient id="pgl" x1="0" y1="0" x2="1" y2="0"><stop offset="0" stop-color="#e8c838"/><stop offset="0.45" stop-color="#fffbe6"/><stop offset="1" stop-color="#fff8d0"/></linearGradient>
<linearGradient id="pgr" x1="1" y1="0" x2="0" y2="0"><stop offset="0" stop-color="#e8c838"/><stop offset="0.45" stop-color="#fffbe6"/><stop offset="1" stop-color="#fff8d0"/></linearGradient></defs>
<rect x="0" y="0" width="64" height="64" fill="url(#pgf)"/>
<path d="M6 6L32 32L6 58Z" fill="url(#pgl)"/>
<path d="M58 6L32 32L58 58Z" fill="url(#pgr)"/>
<path d="M6 6H58L32 32Z" fill="#ecd050"/>
<path d="M6 58H58L32 32Z" fill="#f4dc60"/>
<path d="M11 9.5H51L36 25Q32 28 28 25Z" fill="#1c0200"/>
<path d="M15 52H49L32 37Z" fill="#fffbe8"/>
<path d="M6 6L58 58M58 6L6 58" stroke="#d8b428" stroke-width="1.8"/>
<path d="M8 56H56" stroke="#7a5a08" stroke-width="1.6"/>
<path d="M1 63.5H63" stroke="#3a2a00" stroke-width="1.2"/>
</svg>
<!-- style list -->
<div class="a" style="left:937px;top:752px;width:230px;height:72px;border:1px solid #3c3c3c;border-top:none"></div>
<div class="a" style="left:1150px;top:752px;width:16px;height:47px;background:#474747"></div>
<div class="a" style="left:1152px;top:753px;width:11px;height:3px;background:#5a5a5a"></div>
<div class="chk" style="left:944px;top:753px"></div>
<span class="t" style="left:961px;top:753px;color:#e4e4e4;transform:scaleX(0.740)">ドロップシャドウ</span>
<svg style="left:1131px;top:752px" width="15" height="15"><rect x="0.5" y="0.5" width="13" height="13" fill="none" stroke="#e0e0e0"/><path d="M7 3.5V10.5M3.5 7H10.5" stroke="#e0e0e0" stroke-width="1.8"/></svg>
<div class="a" style="left:940px;top:772px;width:210px;height:1px;background:#3c3c3c"></div>
<div class="chk" style="left:944px;top:779px"></div>
<span class="t" style="left:961px;top:779px;color:#e4e4e4;transform:scaleX(0.740)">ドロップシャドウ</span>
<svg style="left:1131px;top:778px" width="15" height="15"><rect x="0.5" y="0.5" width="13" height="13" fill="none" stroke="#e0e0e0"/><path d="M7 3.5V10.5M3.5 7H10.5" stroke="#e0e0e0" stroke-width="1.8"/></svg>
<svg style="left:1154px;top:784px" width="8" height="5"><path d="M0.5 0.5L4 4L7.5 0.5" fill="none" stroke="#7a7a7a" stroke-width="1"/></svg>
<span class="t" style="left:947px;top:805px;color:#c8c8c8;font-style:italic;font-size:15px;font-family:'Liberation Serif',serif;transform:scaleX(1.108)">fx</span>
<svg style="left:958px;top:816px" width="5" height="3"><path d="M0 0H5L2.5 3Z" fill="#c8c8c8"/></svg>
<svg style="left:974px;top:806px" width="40" height="13"><path d="M5.5 0L11 6H8V12H3V6H0Z" fill="#8a8a8a"/><path d="M31.5 12L37 6H34V0H29V6H26Z" fill="#8a8a8a"/></svg>
<svg style="left:1145px;top:805px" width="12" height="14"><path d="M0.5 2.5H11.5M4 2.5V0.8H8V2.5M1.8 3.5V13H10.2V3.5M4.5 5V11.5M7.5 5V11.5" fill="none" stroke="#c8c8c8" stroke-width="1.1"/></svg>


<div class="dlg" style="left:760px;top:232px;width:552px;height:520px;box-shadow:2px 2px 10px rgba(0,0,0,.6)">
<div class="title" style="height:30px"></div>
</div>
<span class="t" style="left:768px;top:240px;color:#1a1a1a;transform:scaleX(0.715)">グラデーションエディター</span>
<div class="a" style="left:1193px;top:246px;width:10px;height:1px;background:#b8b8b8"></div>
<div class="a" style="left:1238px;top:241px;width:10px;height:10px;border:1px solid #222"></div>
<svg style="left:1284px;top:241px" width="11" height="11"><path d="M0.5 0.5L10.5 10.5M10.5 0.5L0.5 10.5" stroke="#222" stroke-width="1.2"/></svg>
<!-- preset group -->
<div class="grp" style="left:771px;top:279px;width:412px;height:177px"></div>
<div class="a" style="left:786px;top:276px;width:56px;height:8px;background:#4b4b4b"></div>
<span class="t" style="left:792px;top:273px;color:#e0e0e0;transform:scaleX(0.717)">プリセット</span>
<svg style="left:1134px;top:274px" width="17" height="12"><g fill="#e0e0e0"><circle cx="5" cy="5.5" r="3.2"/><path d="M4 0.5h2v2h-2zM4 8.5h2v2h-2zM0 4.5h2v2h-2zM8 4.5h2v2h-2zM1 1.5l1.5-1 1.2 1.6-1.4 1.1zM7.8 9.6l-1.2-1.6 1.4-1.1 1.2 1.6zM1 9.5l1.2-1.6 1.4 1.1-1.2 1.6zM9 1.5l-1.2 1.6-1.4-1.1 1.2-1.6z"/></g><circle cx="5" cy="5.5" r="1.2" fill="#4b4b4b"/><path d="M12 9h3l-1.5 2z" fill="#e0e0e0"/></svg>
<div class="a" style="left:781px;top:295px;width:391px;height:151px;background:#3b3b3b"></div>
<div class="a" style="left:1157px;top:295px;width:15px;height:151px;background:#3e3e3e"></div>
<div class="a" style="left:1158px;top:313px;width:12px;height:42px;background:#5a5a5a"></div>
<svg style="left:1160px;top:303px" width="9" height="5"><path d="M0.5 4.5L4.5 0.5L8.5 4.5" fill="none" stroke="#8a8a8a" stroke-width="1"/></svg>
<svg style="left:1160px;top:433px" width="9" height="5"><path d="M0.5 0.5L4.5 4.5L8.5 0.5" fill="none" stroke="#8a8a8a" stroke-width="1"/></svg>
<svg style="left:790px;top:305px" width="30" height="135">
<g id="prow"><path d="M1.5 1.5L4.5 6L1.5 10.5" fill="none" stroke="#c0c0c0" stroke-width="1.1"/><path d="M12 3H17V4H27V13H12Z" fill="#dcdcdc"/></g>
<g transform="translate(0 29)"><path d="M1.5 1.5L4.5 6L1.5 10.5" fill="none" stroke="#c0c0c0" stroke-width="1.1"/><path d="M12 3H17V4H27V13H12Z" fill="#dcdcdc"/></g><g transform="translate(0 58)"><path d="M1.5 1.5L4.5 6L1.5 10.5" fill="none" stroke="#c0c0c0" stroke-width="1.1"/><path d="M12 3H17V4H27V13H12Z" fill="#dcdcdc"/></g><g transform="translate(0 87)"><path d="M1.5 1.5L4.5 6L1.5 10.5" fill="none" stroke="#c0c0c0" stroke-width="1.1"/><path d="M12 3H17V4H27V13H12Z" fill="#dcdcdc"/></g><g transform="translate(0 116)"><path d="M1.5 1.5L4.5 6L1.5 10.5" fill="none" stroke="#c0c0c0" stroke-width="1.1"/><path d="M12 3H17V4H27V13H12Z" fill="#dcdcdc"/></g>
</svg>
<span class="t" style="left:826px;top:305px;color:#ececec;transform:scaleX(0.990)">Basics</span>
<span class="t" style="left:826px;top:334px;color:#ececec;transform:scaleX(0.999)">Blues</span>
<span class="t" style="left:826px;top:363px;color:#ececec;transform:scaleX(1.008)">Purples</span>
<span class="t" style="left:826px;top:392px;color:#ececec;transform:scaleX(0.988)">Pinks</span>
<span class="t" style="left:826px;top:421px;color:#ececec;transform:scaleX(0.964)">Reds</span>
<!-- right buttons -->
<div class="btnp" style="left:1191px;top:279px;width:109px;height:25px"></div>
<span class="t" style="left:1238px;top:285px;color:#f0f0f0;transform:scaleX(0.923)">OK</span>
<div class="btn" style="left:1191px;top:313px;width:109px;height:25px"></div>
<span class="t" style="left:1219px;top:319px;color:#f0f0f0;transform:scaleX(0.850)">キャンセル</span>
<div class="btn" style="left:1191px;top:347px;width:109px;height:25px"></div>
<span class="t" style="left:1208px;top:353px;color:#f0f0f0;transform:scaleX(1.096)">読み込み(I)...</span>
<div class="btn" style="left:1191px;top:381px;width:109px;height:25px;border-color:#525252"></div>
<span class="t" style="left:1209px;top:387px;color:#8a8a8a;transform:scaleX(1.000)">書き出し(E)...</span>
<!-- name -->
<span class="t" style="left:771px;top:473px;color:#dcdcdc;transform:scaleX(0.905)">グラデーション名(N) :</span>
<div class="inp" style="left:893px;top:468px;width:224px;height:22px;background:#3d3d3d;border-color:#5a5a5a"></div>
<span class="t" style="left:897px;top:474px;color:#ececec;transform:scaleX(0.750)">カスタム</span>
<div class="btn" style="left:1150px;top:467px;width:151px;height:25px"></div>
<span class="t" style="left:1166px;top:473px;color:#f0f0f0;transform:scaleX(0.935)">新規グラデーション(W)</span>
<!-- type group -->
<div class="grp" style="left:771px;top:510px;width:529px;height:221px"></div>
<div class="a" style="left:812px;top:506px;width:118px;height:8px;background:#4b4b4b"></div>
<span class="t" style="left:821px;top:504px;color:#dcdcdc;transform:scaleX(0.829)">グラデーションタイプ :</span>
<div class="inp" style="left:931px;top:501px;width:71px;height:22px;background:#3f3f3f;border-color:#363636;border-radius:2px"></div>
<span class="t" style="left:941px;top:506px;color:#ececec;transform:scaleX(0.917)">べた塗り</span>
<svg style="left:989px;top:510px" width="8" height="5"><path d="M0.5 0.5L4 4L7.5 0.5" fill="none" stroke="#bbb" stroke-width="1.1"/></svg>
<span class="t" style="left:802px;top:535px;color:#dcdcdc;transform:scaleX(1.005)">滑らかさ(M) :</span>
<div class="inp" style="left:881px;top:532px;width:47px;height:19px;background:#3d3d3d;border-color:#363636;border-radius:2px"></div>
<div class="a" style="left:913px;top:533px;width:1px;height:17px;background:#363636"></div>
<span class="t" style="left:884px;top:536px;color:#ececec;transform:scaleX(0.998)">100</span>
<svg style="left:917px;top:540px" width="8" height="5"><path d="M0.5 0.5L4 4L7.5 0.5" fill="none" stroke="#bbb" stroke-width="1.1"/></svg>
<span class="t" style="left:935px;top:536px;color:#dcdcdc;transform:scaleX(1.031)">%</span>
<!-- gradient bar & stops -->
<div class="a" style="left:786px;top:578px;width:499px;height:25px;background:linear-gradient(90deg,#c29b1e 0%,#d7ad22 25%,#fbd12d 50%,#fccf2c 65%,#f1c42a 85%,#e8b926 100%)"></div>
<svg style="left:780px;top:559px" width="512" height="64">
<rect x="2.5" y="2.5" width="8" height="9" fill="#000" stroke="#f0f0f0" stroke-width="1.5"/><path d="M2 13H11L6.5 17.5Z" fill="#6e6e6e"/>
<rect x="497.5" y="2.5" width="8" height="9" fill="#000" stroke="#f0f0f0" stroke-width="1.5"/><path d="M497 13H506L501.5 17.5Z" fill="#6e6e6e"/>
<path d="M2 49H11L6.5 44Z" fill="#000"/><rect x="2.5" y="50.5" width="8" height="9" fill="#c09c1f" stroke="#f0f0f0" stroke-width="1.5"/>
<path d="M250 49H259L254.5 44Z" fill="#7a7a7a"/><rect x="250.5" y="50.5" width="8" height="9" fill="#f8cb28" stroke="#f0f0f0" stroke-width="1.5"/>
<path d="M497 49H506L501.5 44Z" fill="#7a7a7a"/><rect x="497.5" y="50.5" width="8" height="9" fill="#ecc028" stroke="#f0f0f0" stroke-width="1.5"/>
<path d="M131 44.5L134 47.5L131 50.5L128 47.5Z" fill="none" stroke="#e0e0e0" stroke-width="1"/>
</svg>
<!-- stops group -->
<div class="grp" style="left:781px;top:637px;width:511px;height:84px"></div>
<div class="a" style="left:796px;top:633px;width:50px;height:8px;background:#4b4b4b"></div>
<span class="t" style="left:802px;top:630px;color:#e6e6e6;font-size:13px;transform:scaleX(1.000)">終了点</span>
<span class="t" style="left:813px;top:659px;color:#808080;transform:scaleX(1.079)">不透明度 :</span>
<div class="inp" style="left:881px;top:655px;width:47px;height:19px;background:#444;border-color:#4e4e4e"></div>
<div class="a" style="left:882px;top:656px;width:27px;height:17px;background:#3e3e3e"></div>
<svg style="left:917px;top:663px" width="8" height="5"><path d="M0.5 0.5L4 4L7.5 0.5" fill="none" stroke="#666" stroke-width="1"/></svg>
<span class="t" style="left:935px;top:660px;color:#808080;transform:scaleX(1.031)">%</span>
<span class="t" style="left:1072px;top:659px;color:#808080;transform:scaleX(1.076)">位置 :</span>
<div class="inp" style="left:1112px;top:655px;width:42px;height:19px;background:#404040;border-color:#4e4e4e"></div>
<span class="t" style="left:1163px;top:660px;color:#808080;transform:scaleX(1.031)">%</span>
<div class="a" style="left:1189px;top:653px;width:75px;height:22px;background:#474747;border:1px solid #4f4f4f"></div>
<span class="t" style="left:1203px;top:659px;color:#8a8a8a;transform:scaleX(1.156)">削除(D)</span>
<span class="t" style="left:837px;top:694px;color:#dcdcdc;transform:scaleX(0.867)">カラー :</span>
<div class="a" style="left:876px;top:688px;width:43px;height:21px;background:#c29f22;border:1px solid #2e2e2e"></div>
<svg style="left:924px;top:697px" width="8" height="5"><path d="M0.5 0.5L4 4L7.5 0.5" fill="none" stroke="#bbb" stroke-width="1.1"/></svg>
<span class="t" style="left:1055px;top:693px;color:#dcdcdc;transform:scaleX(1.078)">位置(C) :</span>
<div class="inp" style="left:1112px;top:688px;width:42px;height:21px;background:#3d3d3d;border-color:#5a5a5a"></div>
<span class="t" style="left:1116px;top:694px;color:#ececec;transform:scaleX(1.047)">0</span>
<span class="t" style="left:1163px;top:694px;color:#dcdcdc;transform:scaleX(1.031)">%</span>
<div class="a" style="left:1189px;top:687px;width:75px;height:24px;background:#3a3a3a;border:1px solid #555"></div>
<span class="t" style="left:1203px;top:693px;color:#f0f0f0;transform:scaleX(1.156)">削除(D)</span>


<div class="dlg" style="left:206px;top:304px;width:538px;height:401px;box-shadow:2px 2px 10px rgba(0,0,0,.5)">
<div class="title"></div>
</div>
<span class="t" style="left:214px;top:312px;color:#1a1a1a;transform:scaleX(0.719)">カラーピッカー (ストップカラー)</span>
<svg style="left:724px;top:313px" width="11" height="11"><path d="M0.5 0.5L10.5 10.5M10.5 0.5L0.5 10.5" stroke="#222" stroke-width="1.2"/></svg>
<!-- color field: hue 51 -->
<div class="a" style="left:216px;top:365px;width:256px;height:256px;background:linear-gradient(to bottom,rgba(0,0,0,0),#000),linear-gradient(to right,#fff,#fdd02a)"></div>
<svg style="left:464px;top:421px" width="12" height="12"><circle cx="6" cy="6" r="4.8" fill="none" stroke="#1a1a1a" stroke-width="1.2"/></svg>
<!-- hue bar -->
<div class="a" style="left:484px;top:365px;width:19px;height:256px;background:linear-gradient(to bottom,#f00 0%,#f0f 16.67%,#00f 33.33%,#0ff 50%,#0f0 66.67%,#ff0 83.33%,#f00 100%)"></div>
<svg style="left:474px;top:579px" width="40" height="11"><path d="M1 1L7 5.5L1 10Z" fill="#e8e8e8"/><path d="M38 1L32 5.5L38 10Z" fill="#e8e8e8"/></svg>
<span class="t" style="left:520px;top:366px;color:#e0e0e0;transform:scaleX(0.979)">新しい色</span>
<div class="a" style="left:516px;top:382px;width:59px;height:67px;background:#bfa023;border:1px solid #2e2e2e"></div>
<span class="t" style="left:520px;top:452px;color:#e0e0e0;transform:scaleX(1.042)">現在の色</span>
<svg style="left:584px;top:420px" width="13" height="29"><path d="M6.5 1L12 4V10L6.5 13L1 10V4Z" fill="#bcbcbc" stroke="#d8d8d8" stroke-width="0.8"/><path d="M1 4L6.5 7L12 4M6.5 7V13" fill="none" stroke="#4b4b4b" stroke-width="1"/><rect x="1" y="16" width="11" height="12" fill="#c9961e" stroke="#f0f0f0" stroke-width="1.4"/></svg>
<div class="btnp" style="left:617px;top:344px;width:116px;height:26px"></div>
<span class="t" style="left:667px;top:351px;color:#f0f0f0;transform:scaleX(0.923)">OK</span>
<div class="btn" style="left:617px;top:378px;width:116px;height:26px"></div>
<span class="t" style="left:649px;top:385px;color:#f0f0f0;transform:scaleX(0.850)">キャンセル</span>
<div class="btn" style="left:617px;top:420px;width:116px;height:25px"></div>
<span class="t" style="left:632px;top:426px;color:#f0f0f0;transform:scaleX(0.896)">スウォッチに追加</span>
<div class="btn" style="left:617px;top:462px;width:116px;height:25px"></div>
<span class="t" style="left:638px;top:468px;color:#f0f0f0;transform:scaleX(0.781)">カラーライブラリ</span>
<!-- fields -->
<div class="a" style="left:516px;top:507px;width:13px;height:13px;border-radius:50%;background:#e8e8e8"></div>
<div class="a" style="left:520px;top:511px;width:5px;height:5px;border-radius:50%;background:#2a2a2a"></div>
<div class="rad" style="left:516px;top:534px"></div>
<div class="rad" style="left:516px;top:561px"></div>
<div class="rad" style="left:516px;top:592px"></div>
<div class="rad" style="left:516px;top:619px"></div>
<div class="rad" style="left:516px;top:646px"></div>
<div class="rad" style="left:629px;top:507px"></div>
<div class="rad" style="left:629px;top:534px"></div>
<div class="rad" style="left:629px;top:561px"></div>
<span class="t" style="left:535px;top:508px;color:#dcdcdc;transform:scaleX(1.043)">H :</span>
<span class="t" style="left:535px;top:535px;color:#dcdcdc;transform:scaleX(1.091)">S :</span>
<span class="t" style="left:535px;top:562px;color:#dcdcdc;transform:scaleX(1.091)">B :</span>
<span class="t" style="left:535px;top:593px;color:#dcdcdc;transform:scaleX(1.043)">R :</span>
<span class="t" style="left:535px;top:620px;color:#dcdcdc;transform:scaleX(0.999)">G :</span>
<span class="t" style="left:535px;top:647px;color:#dcdcdc;transform:scaleX(1.091)">B :</span>
<span class="t" style="left:648px;top:508px;color:#dcdcdc;transform:scaleX(1.162)">L :</span>
<span class="t" style="left:648px;top:535px;color:#dcdcdc;transform:scaleX(1.124)">a :</span>
<span class="t" style="left:648px;top:562px;color:#dcdcdc;transform:scaleX(1.124)">b :</span>
<span class="t" style="left:656px;top:593px;color:#dcdcdc;transform:scaleX(1.043)">C :</span>
<span class="t" style="left:654px;top:620px;color:#dcdcdc;transform:scaleX(1.080)">M :</span>
<span class="t" style="left:656px;top:647px;color:#dcdcdc;transform:scaleX(1.106)">Y :</span>
<span class="t" style="left:656px;top:674px;color:#dcdcdc;transform:scaleX(1.091)">K :</span>
<div class="inp" style="left:565px;top:503px;width:35px;height:22px"></div>
<div class="inp" style="left:563px;top:530px;width:35px;height:22px"></div>
<div class="inp" style="left:564px;top:557px;width:35px;height:22px"></div>
<div class="inp" style="left:564px;top:588px;width:35px;height:22px"></div>
<div class="inp" style="left:565px;top:615px;width:35px;height:22px"></div>
<div class="inp" style="left:564px;top:642px;width:35px;height:22px"></div>
<div class="inp" style="left:677px;top:503px;width:43px;height:22px"></div>
<div class="inp" style="left:677px;top:530px;width:43px;height:22px"></div>
<div class="inp" style="left:677px;top:557px;width:43px;height:22px"></div>
<div class="inp" style="left:677px;top:588px;width:35px;height:22px"></div>
<div class="inp" style="left:677px;top:615px;width:35px;height:22px"></div>
<div class="inp" style="left:677px;top:642px;width:35px;height:22px"></div>
<div class="inp" style="left:677px;top:669px;width:35px;height:22px"></div>
<span class="t" style="left:570px;top:508px;color:#f0f0f0;transform:scaleX(0.898)">51</span>
<span class="t" style="left:568px;top:535px;color:#f0f0f0;transform:scaleX(0.998)">100</span>
<span class="t" style="left:569px;top:562px;color:#f0f0f0;transform:scaleX(0.973)">75</span>
<span class="t" style="left:569px;top:593px;color:#f0f0f0;transform:scaleX(0.899)">191</span>
<span class="t" style="left:569px;top:620px;color:#f0f0f0;transform:scaleX(0.998)">163</span>
<span class="t" style="left:569px;top:647px;color:#f0f0f0;transform:scaleX(1.047)">0</span>
<span class="t" style="left:682px;top:508px;color:#f0f0f0;transform:scaleX(1.048)">68</span>
<span class="t" style="left:682px;top:535px;color:#f0f0f0;transform:scaleX(0.748)">1</span>
<span class="t" style="left:682px;top:562px;color:#f0f0f0;transform:scaleX(1.048)">70</span>
<span class="t" style="left:682px;top:593px;color:#f0f0f0;transform:scaleX(1.048)">34</span>
<span class="t" style="left:682px;top:620px;color:#f0f0f0;transform:scaleX(1.048)">36</span>
<span class="t" style="left:682px;top:647px;color:#f0f0f0;transform:scaleX(0.998)">100</span>
<span class="t" style="left:682px;top:674px;color:#f0f0f0;transform:scaleX(1.047)">0</span>
<span class="t" style="left:605px;top:508px;color:#dcdcdc;transform:scaleX(1.247)">°</span>
<span class="t" style="left:604px;top:535px;color:#dcdcdc;transform:scaleX(1.031)">%</span>
<span class="t" style="left:604px;top:562px;color:#dcdcdc;transform:scaleX(1.031)">%</span>
<span class="t" style="left:719px;top:594px;color:#dcdcdc;transform:scaleX(1.031)">%</span>
<span class="t" style="left:719px;top:621px;color:#dcdcdc;transform:scaleX(1.031)">%</span>
<span class="t" style="left:719px;top:648px;color:#dcdcdc;transform:scaleX(1.031)">%</span>
<span class="t" style="left:719px;top:675px;color:#dcdcdc;transform:scaleX(1.031)">%</span>
<span class="t" style="left:518px;top:678px;color:#dcdcdc;transform:scaleX(1.196)">#</span>
<div class="inp" style="left:532px;top:672px;width:81px;height:23px;border:2px solid #1d5aa0;background:#3a3a3a"></div>
<span class="t" style="left:537px;top:677px;color:#f4f4f4;transform:scaleX(1.035)">bfa300</span>
<div class="a" style="left:575px;top:676px;width:1px;height:14px;background:#e8e8e8"></div>
<div class="chk" style="left:216px;top:635px;width:13px;height:13px;border-color:#6e6e6e;background:#454545"></div>
<span class="t" style="left:236px;top:635px;color:#e0e0e0;transform:scaleX(0.926)">Web セーフカラーのみに制限</span>
<!-- cursor -->
<div class="a" style="left:723px;top:384px;width:21px;height:21px;border-radius:50%;background:rgba(210,200,40,.85)"></div>
<svg style="left:733px;top:392px" width="14" height="22"><path d="M1 1V17L5 13L8 20L10.5 19L7.5 12.5H13Z" fill="#fff" stroke="#000" stroke-width="1"/></svg>

</body></html>
